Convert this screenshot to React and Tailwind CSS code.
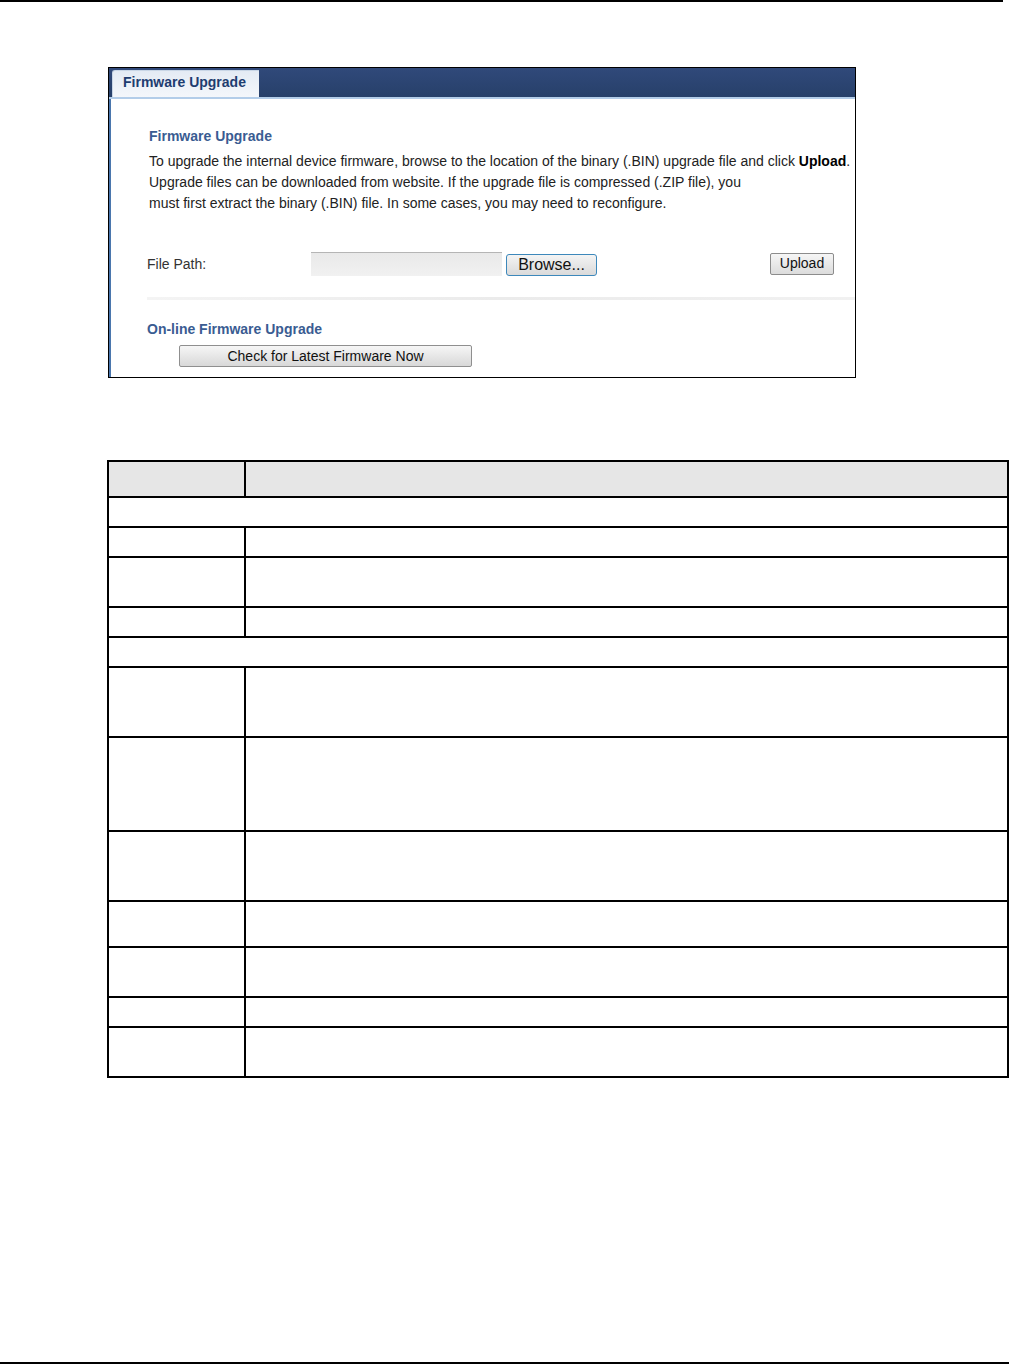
import React from "react";

const rows = [
  { h: 34, full: false, head: true },
  { h: 30, full: true },
  { h: 30 },
  { h: 50 },
  { h: 30 },
  { h: 30, full: true },
  { h: 70 },
  { h: 94 },
  { h: 70 },
  { h: 46 },
  { h: 50 },
  { h: 30 },
  { h: 50 },
];

const hClass = {
  34: "h-[34px]",
  30: "h-[30px]",
  50: "h-[50px]",
  70: "h-[70px]",
  94: "h-[94px]",
  46: "h-[46px]",
};

export default function App() {
  return (
    <div className="w-[1009px] h-[1364px] bg-white flex flex-col font-['Liberation_Sans',Arial,sans-serif] text-[14px] text-[#222]">
      <div className="h-[2px] w-[1003px] bg-black shrink-0" />

      {/* screenshot box */}
      <div className="ml-[108px] mt-[65px] w-[748px] h-[311px] border border-black flex flex-col shrink-0 overflow-hidden">
        <div className="h-[29px] flex items-end pl-[3px] shrink-0 bg-gradient-to-b from-[#30497a] to-[#27406a]">
          <div className="w-[147px] h-[27px] bg-gradient-to-b from-[#e4ebf4] to-[#f4f7fb] rounded-tl-[3px] border-t border-l border-[#c9d6e6] flex items-start pt-[2px] pl-[10px] leading-[18px] font-bold text-[#1e3d70] text-[14px]">
            Firmware Upgrade
          </div>
        </div>
        <div className="h-[2px] bg-[#b3cde9] shrink-0" />
        <div className="flex-1 border-l-[2px] border-[#4a76ad] pl-[36px] pt-[27px] flex flex-col">
          <div className="ml-[2px] leading-[20px] font-bold text-[#3a5c92]">Firmware Upgrade</div>
          <p className="ml-[2px] mt-[5px] leading-[21px] text-[#222] whitespace-nowrap">
            To upgrade the internal device firmware, browse to the location of the binary (.BIN) upgrade file and click <b className="text-black">Upload</b>.
            <br />
            Upgrade files can be downloaded from website. If the upgrade file is compressed (.ZIP file), you
            <br />
            must first extract the binary (.BIN) file. In some cases, you may need to reconfigure.
          </p>
          <div className="mt-[38px] flex items-center h-[24px]">
            <div className="w-[164px] text-[#333]">File Path:</div>
            <div className="w-[191px] h-[24px] bg-gradient-to-b from-[#e9e9e9] to-[#f1f1f1] border-t border-[#b5b5b5]" />
            <div className="ml-[4px] w-[91px] h-[22px] mt-[2px] rounded-[3px] border border-[#3d88bb] bg-gradient-to-b from-[#f4f4f4] to-[#dadada] flex items-center justify-center text-[16px] text-[#111]">
              Browse...
            </div>
            <div className="ml-[173px] w-[64px] h-[22px] -mt-[1px] rounded-[2px] border border-[#8c8c8c] bg-gradient-to-b from-[#f6f6f6] to-[#dcdcdc] flex items-center justify-center text-[14px] text-[#111]">
              Upload
            </div>
          </div>
          <div className="mt-[21px] h-[3px] bg-gradient-to-r from-[#f4f4f4] via-[#ebebeb] to-[#f1f1f1] shrink-0" />
          <div className="mt-[19px] leading-[20px] font-bold text-[#3a5c92]">On-line Firmware Upgrade</div>
          <div className="mt-[6px] ml-[32px] w-[293px] h-[22px] rounded-[2px] border border-[#8f8f8f] bg-gradient-to-b from-[#f6f6f6] to-[#d8d8d8] flex items-center justify-center text-[14px] text-[#111] shrink-0">
            Check for Latest Firmware Now
          </div>
        </div>
      </div>

      {/* table */}
      <div className="ml-[107px] mt-[82px] w-[902px] border-2 border-black flex flex-col shrink-0">
        {rows.map((r, i) => (
          <div
            key={i}
            className={`flex ${hClass[r.h]} ${i > 0 ? "border-t-2 border-black" : ""} ${r.head ? "bg-[#e6e6e6]" : ""}`}
          >
            {r.full ? (
              <div className="flex-1" />
            ) : (
              <>
                <div className="w-[135px] shrink-0" />
                <div className="flex-1 border-l-2 border-black" />
              </>
            )}
          </div>
        ))}
      </div>

      <div className="mt-auto h-[2px] w-full bg-black shrink-0" />
    </div>
  );
}
